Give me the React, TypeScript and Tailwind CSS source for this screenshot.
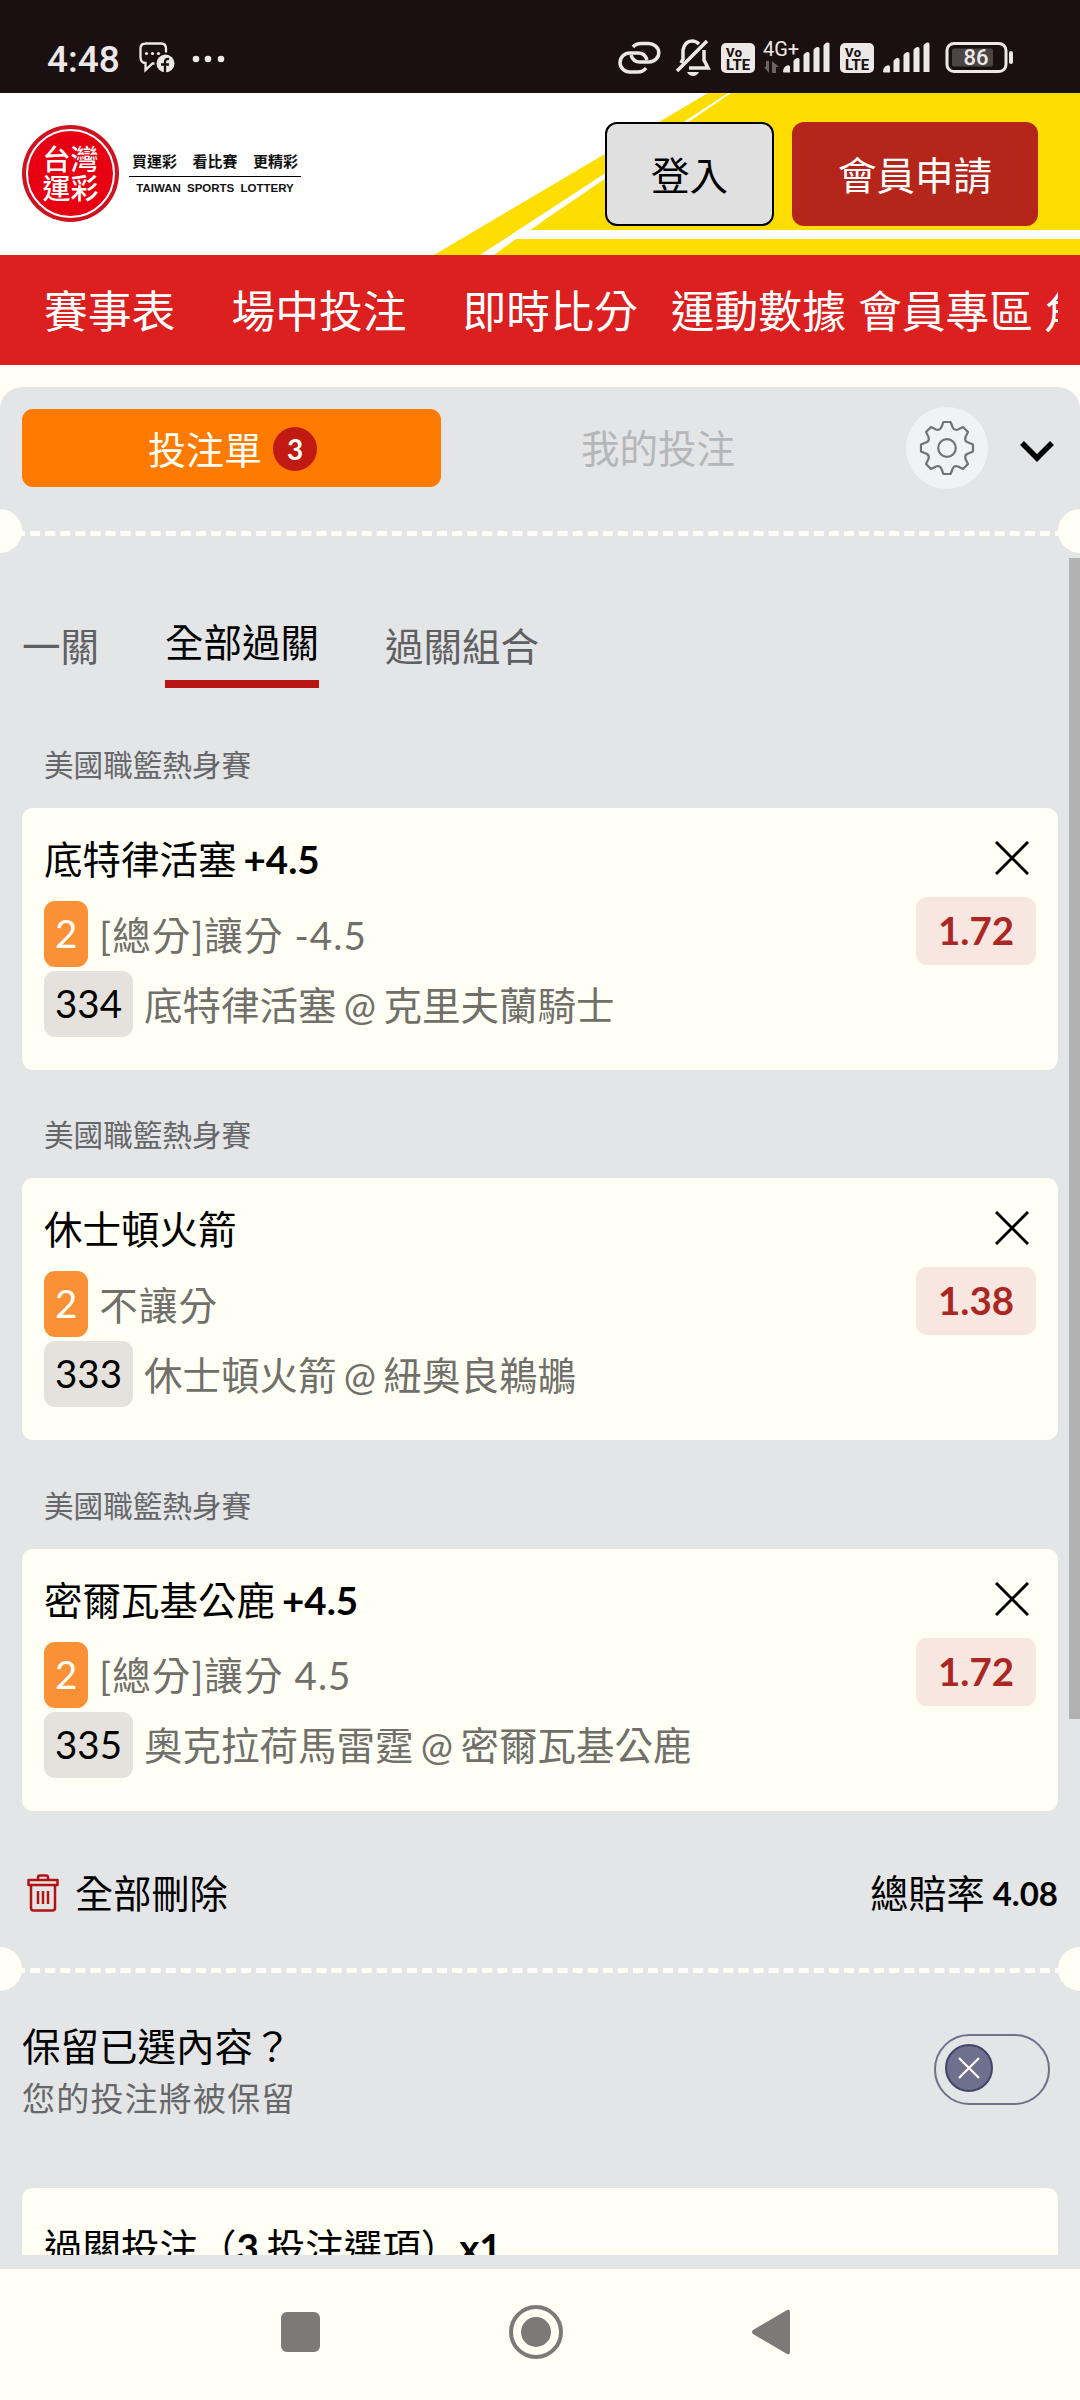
import { ReactNode } from 'react';

interface Bet {
  league: string;
  pick: string;
  handicap?: string;
  market: string;
  code: string;
  match: [string, string];
  odds: string;
}

const bets: Bet[] = [
  { league: '美國職籃熱身賽', pick: '底特律活塞', handicap: '+4.5', market: '[總分]讓分 -4.5', code: '334', match: ['底特律活塞', '克里夫蘭騎士'], odds: '1.72' },
  { league: '美國職籃熱身賽', pick: '休士頓火箭', market: '不讓分', code: '333', match: ['休士頓火箭', '紐奧良鵜鶘'], odds: '1.38' },
  { league: '美國職籃熱身賽', pick: '密爾瓦基公鹿', handicap: '+4.5', market: '[總分]讓分 4.5', code: '335', match: ['奧克拉荷馬雷霆', '密爾瓦基公鹿'], odds: '1.72' },
];

function VoLte() {
  return (
    <svg width="34" height="30" viewBox="0 0 34 30">
      <rect width="34" height="30" rx="5" fill="#ece8e8" />
      <text x="5" y="13.5" fontSize="13" fontWeight="800" letterSpacing="0.5" fill="#1b1011">Vo</text>
      <text x="5" y="26.5" fontSize="14" fontWeight="800" textLength="24" lengthAdjust="spacingAndGlyphs" fill="#1b1011">LTE</text>
    </svg>
  );
}

function Signal() {
  return (
    <svg width="48" height="32" viewBox="0 0 48 32" fill="#ece8e8">
      <path d="M0 31q0-5 4-6.500q3-1 3 1.500v5.500H1zM10.500 31V20q1-2 3.500-3 2.500-.5 2.500 1.500V31zM20.500 31V14q1-2 3.500-3 2.500-.5 2.500 1.500V31zM30.500 31V9q1-2 3.500-3 2.500-.5 2.500 1.500V31zM40.500 31V4.500q1-2 3.500-3 2.500-.5 2.500 1.500V31z" />
    </svg>
  );
}

function StatusBar() {
  return (
    <div className="h-[93px] bg-[#1b1011] font-[Roboto,sans-serif] text-[#ece8e8]">
      <div className="flex h-full items-start pt-[40px] pl-[47px]">
        <span className="mt-px w-[92px] text-[37px] leading-[38px] font-medium">4:48</span>
        <svg width="36" height="32" viewBox="0 0 36 32" className="mt-[2px]">
          <path d="M6 1.5h16q5 0 5 5v4M1.5 16V6.5q0-5 5-5M1.5 15q0 6 5 6v7l7-6.500h2" fill="none" stroke="#ece8e8" strokeWidth="2.300" />
          <circle cx="7.500" cy="11.500" r="1.600" fill="currentColor" />
          <circle cx="13.500" cy="11.500" r="1.600" fill="currentColor" />
          <circle cx="19.500" cy="11.500" r="1.600" fill="currentColor" />
          <circle cx="26.500" cy="21.500" r="9" fill="currentColor" />
          <path d="M26 31V20q0-3.500 4-3M22 22.500h8" fill="none" stroke="#1b1011" strokeWidth="2.300" />
        </svg>
        <svg width="34" height="8" viewBox="0 0 34 8" className="mt-[15px] ml-[17px]" fill="currentColor">
          <circle cx="4" cy="4" r="3.300" />
          <circle cx="16" cy="4" r="3.300" />
          <circle cx="29" cy="4" r="3.300" />
        </svg>

        <svg width="43" height="34" viewBox="0 0 43 34" className="mt-px ml-[392px]" fill="none" stroke="currentColor" strokeWidth="3.500">
          <path d="M15 6Q18 2.500 23 2.500h7a10 9 0 0 1 1 18.500h-9q-7 0-9-7" />
          <path d="M28 27q-3 4-8 4h-8a10 9.500 0 0 1 0-19h8q7 0 9 7" />
        </svg>
        <svg width="36" height="40" viewBox="0 0 36 40" className="-mt-[2px] ml-[14px]" fill="none" stroke="currentColor" strokeWidth="3.500">
          <path d="M6 25l2-4v-9Q10 3 17 3q4 0 7 3M29 12v10l4 8H14" />
          <path d="M32 3L2 33" />
          <path d="M12 34h12q-2 4-6 4t-6-4z" fill="currentColor" stroke="none" />
        </svg>
        <div className="mt-[3px] ml-[10px]"><VoLte /></div>
        <div className="relative mt-[1px] ml-[28px]">
          <Signal />
          <span className="absolute -top-[4px] -left-[20px] text-[20px] leading-[24px]">4G+</span>
          <svg width="16" height="12" viewBox="0 0 16 12" className="absolute top-[20px] -left-[19px]" fill="#6b6465">
            <path d="M5 0v12L0 6h2V0zM8 12V0l7 6h-3v6z" />
          </svg>
        </div>
        <div className="mt-[3px] ml-[9px]"><VoLte /></div>
        <div className="mt-[1px] ml-[9px]"><Signal /></div>
        <svg width="70" height="32" viewBox="0 0 70 32" className="mt-[2px] ml-[14px]">
          <rect x="2" y="1.500" width="59" height="28" rx="7" fill="none" stroke="#ece8e8" strokeWidth="3" />
          <rect x="7" y="6.500" width="41" height="18" rx="2" fill="#4c4546" />
          <path d="M66 11v9" stroke="#ece8e8" strokeWidth="4" strokeLinecap="round" />
          <text x="31" y="23" textAnchor="middle" fontSize="22" fontWeight="500" fill="#ece8e8">86</text>
        </svg>
      </div>
    </div>
  );
}

function Header() {
  return (
    <header className="relative h-[162px] bg-white">
      <svg width="1080" height="162" viewBox="0 0 1080 162" className="absolute inset-0">
        <path d="M434 162L708 0h372v162z" fill="#fedd00" />
        <path d="M480 162L728 0h3L540 130v7h540v9H516L494 162z" fill="#fff" />
        <path d="M530 137l14-9h22l-12 9z" fill="#fedd00" />
      </svg>
      <div className="relative flex h-full items-start">
        <div className="mt-[32px] ml-[22px] flex h-[97px] w-[97px] items-center justify-center rounded-full bg-[#d0111f] p-[4px]">
          <div className="flex h-full w-full flex-col items-center justify-center rounded-full border-2 border-white bg-[#e60012] pt-px text-[28px] leading-[29px] font-medium text-white">
            <span>台灣</span>
            <span>運彩</span>
          </div>
        </div>
        <div className="mt-[57px] ml-[10px] w-[172px] text-center text-[#111]">
          <div className="flex justify-between border-b border-black px-[3px] pb-[4px] text-[15px] leading-[22px] font-bold">
            <span>買運彩</span>
            <span>看比賽</span>
            <span>更精彩</span>
          </div>
          <div className="mt-[4px] font-['Liberation_Sans',sans-serif] text-[11.500px] leading-[14px] font-bold whitespace-nowrap [word-spacing:3px]">
            TAIWAN SPORTS LOTTERY
          </div>
        </div>
        <button className="mt-[29px] ml-[304px] h-[104px] w-[169px] rounded-[12px] border-2 border-black bg-[#e0e0e0] pt-[3px] text-[38.5px] text-black">登入</button>
        <button className="mt-[29px] ml-[18px] h-[104px] w-[246px] rounded-[12px] bg-[#b4251a] pt-[3px] text-[38.5px] text-white">會員申請</button>
      </div>
    </header>
  );
}

function NavBar() {
  return (
    <nav className="flex h-[110px] w-full items-center overflow-hidden bg-[#dc1f1f] pt-[4px] pr-[22px] text-[43.800px] whitespace-nowrap text-white">
      <div className="flex overflow-hidden pl-[44px]">
        <span className="mr-[56px]">賽事表</span>
        <span className="mr-[56px]">場中投注</span>
        <span className="mr-[33px]">即時比分</span>
        <span className="mr-[12px]">運動數據</span>
        <span className="mr-[11px]">會員專區</span>
        <span>角</span>
      </div>
    </nav>
  );
}

function Perforation() {
  return (
    <div className="relative flex h-[44px] items-center overflow-hidden">
      <div className="mt-[4px] w-full border-t-[5px] border-dashed border-[#fffff6]" />
      <div className="absolute -left-[22px] h-[44px] w-[44px] rounded-full bg-[#fffff6]" />
      <div className="absolute -right-[22px] h-[44px] w-[44px] rounded-full bg-[#fffff6]" />
    </div>
  );
}

function SlipHeader() {
  return (
    <div className="flex h-[122px] items-start pt-[22px] pl-[22px]">
      <div className="flex h-[78px] w-[419px] items-center justify-center gap-[11px] rounded-[11px] bg-[#ff7a00] pt-[2px] pl-[2px] text-[38px] text-[#fffff6]">
        投注單
        <span className="-mt-px flex h-[44px] w-[44px] items-center justify-center rounded-full bg-[#c01a12] font-[Lato,sans-serif] text-[28px] font-bold">3</span>
      </div>
      <div className="flex h-[78px] w-[434px] items-center justify-center pt-[2px] text-[38.5px] text-[#b5b6b8]">我的投注</div>
      <div className="-mt-[2px] ml-[31px] flex h-[82px] w-[82px] items-center justify-center rounded-full bg-[#f1f2f5]">
        <svg width="56" height="56" viewBox="-28 -28 56 56" fill="none" stroke="#727272" strokeWidth="2.200" strokeLinejoin="round">
          <path d="M-3.500-26h7l2.500 6q1.500 2.500 5 1.500l5-2.500 5 5-2.500 5q-1 3.500 1.500 5l6 2.500v7l-6 2.500q-2.500 1.500-1.500 5l2.500 5-5 5-5-2.500q-3.500-1-5 1.500L3.500 26h-7L-6 20q-1.500-2.500-5-1.500l-5 2.500-5-5 2.500-5q1-3.500-1.500-5L-26 3.500v-7L-20-6q2.500-1.500 1.500-5l-2.500-5 5-5 5 2.500q3.500 1 5-1.500z" />
          <circle r="8.800" />
        </svg>
      </div>
      <svg width="34" height="22" viewBox="0 0 34 22" className="mt-[31px] ml-[32px]" fill="none" stroke="#000" strokeWidth="5.500">
        <path d="M2 3l15 15L32 3" />
      </svg>
    </div>
  );
}

function Tabs() {
  return (
    <div className="flex h-[65px] items-start pl-[22px] text-[38.5px] leading-[38px] text-[#5f6062]">
      <span className="mt-[4px] mr-[66px]">一關</span>
      <span className="mr-[66px] h-[65px] border-b-[8px] border-[#b81414] text-black">全部過關</span>
      <span className="mt-[4px]">過關組合</span>
    </div>
  );
}

function Chip({ className, children }: { className: string; children: ReactNode }) {
  return (
    <span className={`flex h-[66px] items-center rounded-[11px] px-[11px] font-[Lato,sans-serif] text-[38.5px] ${className}`}>
      {children}
    </span>
  );
}

function BetCard({ bet }: { bet: Bet }) {
  return (
    <section className="h-[370.3px]">
      <div className="h-[86px] pt-[21px] pl-[44px] text-[29.6px] leading-[44px] text-[#66676a]">{bet.league}</div>
      <div className="mx-[22px] flex h-[262px] justify-between rounded-[11px] bg-[#fffff6] pr-[22px] pl-[22px]">
        <div className="pt-[26px] text-[38.5px] text-[#706f69]">
          <div className="flex gap-[7px] leading-[50px] text-black">
            {bet.pick}
            {bet.handicap && <span className="font-[Lato,sans-serif] font-bold">{bet.handicap}</span>}
          </div>
          <div className="mt-[17px] flex items-center gap-[11px]">
            <Chip className="bg-[#fa9137] text-[#fffff6]">2</Chip>
            <span className="pt-[3px] tracking-[1.1px]">{bet.market}</span>
          </div>
          <div className="mt-[4px] flex items-center gap-[11px]">
            <Chip className="bg-[#e5e2dd] text-black">{bet.code}</Chip>
            <span className="pt-[3px] [word-spacing:-2.500px]">{bet.match[0]} @ {bet.match[1]}</span>
          </div>
        </div>
        <div className="flex flex-col items-end pt-[33px]">
          <svg width="34" height="34" viewBox="0 0 34 34" className="mr-[7px]" stroke="#000" strokeWidth="3">
            <path d="M1 1l32 32M33 1L1 33" />
          </svg>
          <div className="mt-[22px] flex h-[68px] w-[120px] items-center justify-center rounded-[11px] bg-[#f7e7e0] font-[Lato,sans-serif] text-[38.5px] font-bold text-[#ab2723]">
            {bet.odds}
          </div>
        </div>
      </div>
    </section>
  );
}

function TrashIcon() {
  return (
    <svg width="32" height="38" viewBox="0 0 32 38" fill="none" stroke="#b01515" strokeWidth="2.500" strokeLinejoin="round">
      <path d="M1.500 6h29v5h-29zM11 6V3.500q0-2 2-2h6q2 0 2 2V6M4 11V34q0 2.500 2.500 2.500h19Q28 36.500 28 34V11M11 17v13M16 17v13M21 17v13" />
    </svg>
  );
}

function SystemNav() {
  return (
    <div className="flex h-[131px] items-center bg-[#fffff6] pb-[6px] pl-[281px]">
      <div className="h-[40px] w-[39px] rounded-[6px] bg-[#7b7a76]" />
      <div className="ml-[189px] flex h-[54px] w-[54px] items-center justify-center rounded-full border-4 border-[#7b7a76]">
        <div className="h-[30px] w-[30px] rounded-full bg-[#7b7a76]" />
      </div>
      <svg width="38" height="46" viewBox="0 0 38 46" className="ml-[189px]" fill="#7b7a76">
        <path d="M1 21L35 1q3-1 3 2v40q0 3-3 2L1 25q-2-2 0-4z" />
      </svg>
    </div>
  );
}

export default function App() {
  return (
    <div className="h-[2400px] w-[1080px] overflow-hidden bg-[#fffff6] font-[Lato,'Noto_Sans_CJK_TC',sans-serif]">
      <StatusBar />
      <Header />
      <NavBar />
      <main className="relative mt-[22px] h-[1882px] overflow-hidden rounded-t-[22px] bg-[#e4e5e7]">
        <SlipHeader />
        <Perforation />
        <div className="h-[1702px] overflow-hidden pt-[70px]">
          <Tabs />
          <div className="pt-[34px]">
            {bets.map((bet) => (
              <BetCard key={bet.code} bet={bet} />
            ))}
          </div>
          <div className="flex h-[114px] items-center justify-between pt-[7px] pr-[22px] pl-[27px] text-[38.200px] text-black">
            <div className="flex items-center gap-[16px]">
              <TrashIcon />
              全部刪除
            </div>
            <div className="flex items-center gap-[8px]">
              總賠率 <span className="text-[33px] font-bold">4.08</span>
            </div>
          </div>
          <Perforation />
          <div className="flex h-[197px] items-start justify-between pt-[28px] pr-[30px] pl-[22px]">
            <div>
              <div className="text-[38.5px] leading-[54px] text-black">保留已選內容？</div>
              <div className="text-[33px] leading-[50px] tracking-[1.2px] text-[#66676a]">您的投注將被保留</div>
            </div>
            <div className="mt-[15px] h-[71px] w-[116px] rounded-full border-2 border-[#6f708c] pt-[8px] pl-[9px]">
              <div className="flex h-[48px] w-[48px] items-center justify-center rounded-full border-2 border-[#45446a] bg-[#6f6f8e]">
                <svg width="22" height="22" viewBox="0 0 22 22" stroke="#fffff6" strokeWidth="2.200">
                  <path d="M1 1l20 20M21 1L1 21" />
                </svg>
              </div>
            </div>
          </div>
          <div className="mx-[22px] h-[67px] overflow-hidden rounded-t-[11px] bg-[#fffff6] pt-[32px] pl-[22px] text-[38.5px] leading-[54px] whitespace-nowrap text-black [word-spacing:-2px]">
            過關投注（<b>3</b> 投注選項）<b>x1</b>
          </div>
        </div>
        {/* scrollbar thumb */}
        <div className="absolute top-[171px] right-0 h-[1161px] w-[11px] bg-[#b2b2b2]" />
      </main>
      <SystemNav />
    </div>
  );
}
